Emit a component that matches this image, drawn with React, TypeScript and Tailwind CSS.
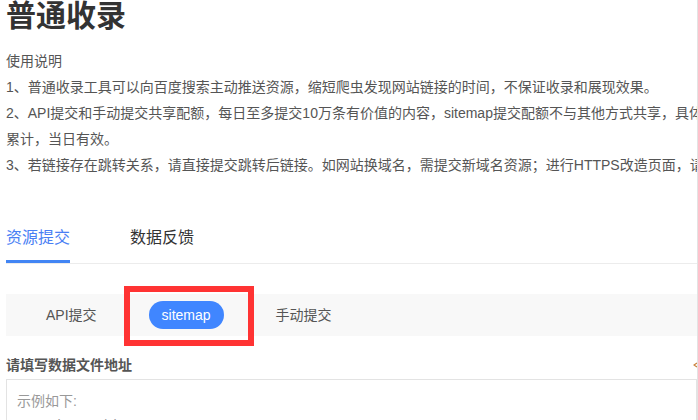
import React from 'react';

const font = { fontFamily: '"Liberation Sans", "Noto Sans CJK SC", sans-serif' };

const notes = [
  '1、普通收录工具可以向百度搜索主动推送资源，缩短爬虫发现网站链接的时间，不保证收录和展现效果。',
  '2、API提交和手动提交共享配额，每日至多提交10万条有价值的内容，sitemap提交配额不与其他方式共享，具体配额以站点页面显示数据为准。配额不可',
  '累计，当日有效。',
  '3、若链接存在跳转关系，请直接提交跳转后链接。如网站换域名，需提交新域名资源；进行HTTPS改造页面，请提交HTTPS新链接。',
];

const modes = ['API提交', 'sitemap', '手动提交'];

export default function App() {
  const active = 'sitemap';

  return (
    <div
      className="relative w-[698px] h-[420px] overflow-hidden bg-white border-r border-[#e3e3e3] pl-[6px]"
      style={font}
    >
      <h1 className="text-[30px] leading-[32px] font-bold text-[#333] whitespace-nowrap">普通收录</h1>

      <div className="mt-[16px] text-[14px] leading-[26px] text-[#555] whitespace-nowrap">
        <p>使用说明</p>
        {notes.map((line) => (
          <p key={line}>{line}</p>
        ))}
      </div>

      <div className="mt-[48px] flex gap-[60px] border-b border-[#ececec]">
        <div className="pb-[10px] border-b-[3px] border-[#4285f4] text-[16px] leading-[24px] text-[#4a7ff4]">
          资源提交
        </div>
        <div className="pb-[13px] text-[16px] leading-[24px] text-[#333]">数据反馈</div>
      </div>

      <div className="mt-[30px] h-[42px] bg-[#f8f8f8] flex items-center pl-[25px] gap-[37px]">
        {modes.map((m) =>
          m === active ? (
            <span
              key={m}
              className="h-[28px] px-[13px] rounded-full bg-[#4086ff] text-white text-[14px] leading-[28px]"
            >
              {m}
            </span>
          ) : (
            <span key={m} className="px-[15px] text-[14px] leading-[28px] text-[#555]">
              {m}
            </span>
          )
        )}
      </div>

      <div className="mt-[19px] flex items-center justify-between">
        <span className="text-[14px] leading-[20px] font-bold text-[#555]">请填写数据文件地址</span>
        <svg width="4" height="6" viewBox="0 0 4 6">
          <path d="M4 1 L1 3 L4 5" fill="none" stroke="#c9803b" strokeWidth="1.2" />
        </svg>
      </div>

      <div className="mt-[4px] h-[80px] border border-[#e3e3e3] px-[10px] py-[9px] text-[14px] leading-[24px] text-[#999]">
        <p>示例如下:</p>
        <p>www.site.com/site.txt</p>
      </div>

      <div className="absolute left-[124px] top-[286px] w-[130px] h-[60px] border-[6px] border-[#ff3333]" />
    </div>
  );
}
